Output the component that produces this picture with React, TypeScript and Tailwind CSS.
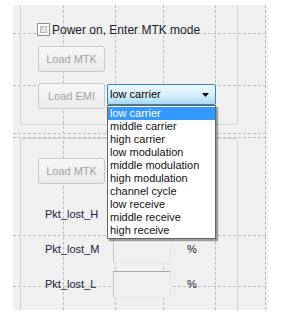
const ITEMS = [
  "low carrier",
  "middle carrier",
  "high carrier",
  "low modulation",
  "middle modulation",
  "high modulation",
  "channel cycle",
  "low receive",
  "middle receive",
  "high receive",
];

// designer layout guides (panel coords)
const V_GUIDES = ["left-[50px]", "left-[102px]", "left-[150px]", "left-[202px]", "left-[252px]"];
const H_GUIDES = ["top-[28px]", "top-[80px]", "top-[128px]", "top-[132px]", "top-[230px]", "top-[281px]"];

const DisabledButton = ({ label, className = "" }: { label: string; className?: string }) => (
  <div
    className={`w-[67px] h-[26px] flex items-center justify-center rounded-[3px] border border-[#c9c9c9] bg-gradient-to-b from-[#f7f7f7] to-[#ececec] text-[#a3a3a3] ${className}`}
  >
    {label}
  </div>
);

const PktRow = ({ label }: { label: string }) => (
  <div className="flex items-center h-[27px]">
    <span className="w-[68px] ml-[24px] text-[#20203a]">{label}</span>
    <div className="w-[58px] h-[27px] border-t border-l border-t-[#a8a8a8] border-l-[#c8c8c8] border-r border-b border-r-[#e6e6e6] border-b-[#e6e6e6] bg-[#f0f0f0]" />
    <span className="ml-[16px] text-[#20203a]">%</span>
  </div>
);

export default function App() {
  return (
    <div
      className="relative w-[305px] h-[317px] bg-white overflow-hidden text-[11px] leading-none"
      style={{ fontFamily: '"Liberation Sans", Arial, sans-serif' }}
    >
      <div className="relative ml-[13px] mt-[5px] w-[255px] h-[305px] bg-[#f0f0f0]">
        {/* guides */}
        {V_GUIDES.map((c) => (
          <div key={c} className={`absolute top-0 bottom-0 ${c} border-l border-dashed border-[#bcbcbc]`} />
        ))}
        {H_GUIDES.map((c) => (
          <div key={c} className={`absolute left-0 right-[2px] ${c} border-t border-dashed border-[#bcbcbc]`} />
        ))}

        {/* group box 1 */}
        <div className="relative ml-[7px] w-[218px] h-[120px] border border-t-0 border-[#d3d3d3] rounded-b-[3px]">
          <div className="flex items-center ml-[16px] pt-[18px] h-[31px]">
            <div className="w-[13px] h-[13px] border border-[#8e8f8f] bg-white p-[2px]">
              <div className="w-full h-full bg-gradient-to-br from-[#cfcfcf] to-[#f4f4f4] border border-[#b8b8b8]" />
            </div>
            <span className="ml-[2px] text-[12px] text-[#1c1c2c]">Power on, Enter MTK mode</span>
          </div>
          <DisabledButton label="Load MTK" className="ml-[17px] mt-[10px]" />
          <div className="flex items-start ml-[17px] mt-[11px]">
            <DisabledButton label="Load EMI" className="h-[25px]" />
            <div className="ml-[2px] mt-[1px] w-[109px] h-[21px] flex items-center justify-between border border-[#3c7fb1] rounded-[2px] bg-gradient-to-b from-[#eaf6fd] via-[#d9f0fc] to-[#a7d9f5] pl-[2px] pr-[6px] text-black">
              <span>low carrier</span>
              <svg width="7" height="4" viewBox="0 0 7 4">
                <path d="M0 0h7L3.5 4z" fill="#000" />
              </svg>
            </div>
          </div>
        </div>

        {/* group box 2 */}
        <div className="relative ml-[7px] mt-[13px] w-[218px] h-[172px] border border-b-0 border-[#d3d3d3] rounded-t-[3px]">
          <DisabledButton label="Load MTK" className="ml-[17px] mt-[19px] h-[25px]" />
          <div className="mt-[17px] flex flex-col gap-[8px]">
            <PktRow label="Pkt_lost_H" />
            <PktRow label="Pkt_lost_M" />
            <PktRow label="Pkt_lost_L" />
          </div>
        </div>

        {/* dropdown popup */}
        <div className="absolute left-[94px] top-[100px] w-[109px] py-[1px] bg-white border border-[#646464] shadow-[2px_2px_1px_rgba(0,0,0,0.35)]">
          {ITEMS.map((item, i) => (
            <div
              key={item}
              className={`h-[13px] pl-[2px] flex items-center ${i === 0 ? "bg-[#3399ff] text-white" : "text-[#111]"}`}
            >
              {item}
            </div>
          ))}
        </div>
      </div>
    </div>
  );
}
